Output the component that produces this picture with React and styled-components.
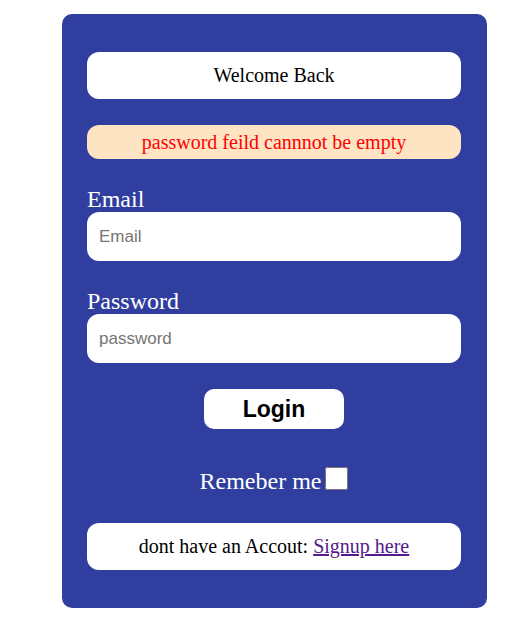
import React, { useState } from 'react';
import styled, { createGlobalStyle } from 'styled-components';

const GlobalStyle = createGlobalStyle`
  body {
    margin: 0;
    background: #ffffff;
    font-family: "Liberation Serif", "Times New Roman", serif;
  }
`;

const Page = styled.div`
  padding: 14px 0 0 62px;
`;

const Card = styled.form`
  width: 425px;
  box-sizing: border-box;
  padding: 38px 26px 38px 25px;
  background-color: #303f9f;
  border-radius: 10px;
  display: flex;
  flex-direction: column;
`;

const Banner = styled.div`
  height: ${props => props.h}px;
  margin-top: ${props => props.mt || 0}px;
  background-color: ${props => props.bg || '#ffffff'};
  color: ${props => props.color || '#000000'};
  border-radius: 12px;
  display: flex;
  align-items: center;
  justify-content: center;
  font-size: 20px;
`;

const Label = styled.label`
  margin-top: ${props => props.mt}px;
  color: #ffffff;
  font-size: 24px;
  line-height: 26px;
  height: 26px;
`;

const Input = styled.input`
  height: 49px;
  box-sizing: border-box;
  border: none;
  border-radius: 12px;
  padding: 0 12px;
  font-family: "Liberation Sans", Arial, sans-serif;
  font-size: 17px;
  outline: none;
  &::placeholder {
    color: #757575;
  }
`;

const LoginButton = styled.button`
  align-self: center;
  width: 140px;
  height: 40px;
  margin-top: 26px;
  border: none;
  border-radius: 10px;
  background: #ffffff;
  font-family: "Liberation Sans", Arial, sans-serif;
  font-weight: bold;
  font-size: 23px;
  color: #000000;
  cursor: pointer;
`;

const RememberRow = styled.div`
  align-self: center;
  margin-top: 38px;
  display: flex;
  align-items: flex-end;
  color: #ffffff;
  font-size: 24px;
  line-height: 26px;
`;

const Check = styled.input`
  width: 23px;
  height: 23px;
  margin: 0 0 4px 4px;
`;

const SignupLink = styled.a`
  color: #551a8b;
  margin-left: 5px;
`;

export default function App() {
  const [remember, setRemember] = useState(false);
  return (
    <Page>
      <GlobalStyle />
      <Card onSubmit={e => e.preventDefault()}>
        <Banner h={47}>Welcome Back</Banner>
        <Banner h={34} mt={26} bg="#ffe4c4" color="#ff0000">
          password feild cannnot be empty
        </Banner>
        <Label mt={27}>Email</Label>
        <Input type="email" placeholder="Email" />
        <Label mt={27}>Password</Label>
        <Input type="password" placeholder="password" />
        <LoginButton type="submit">Login</LoginButton>
        <RememberRow>
          Remeber me
          <Check
            type="checkbox"
            checked={remember}
            onChange={e => setRemember(e.target.checked)}
          />
        </RememberRow>
        <Banner h={47} mt={29}>
          dont have an Accout:
          <SignupLink href="#signup">Signup here</SignupLink>
        </Banner>
      </Card>
    </Page>
  );
}
